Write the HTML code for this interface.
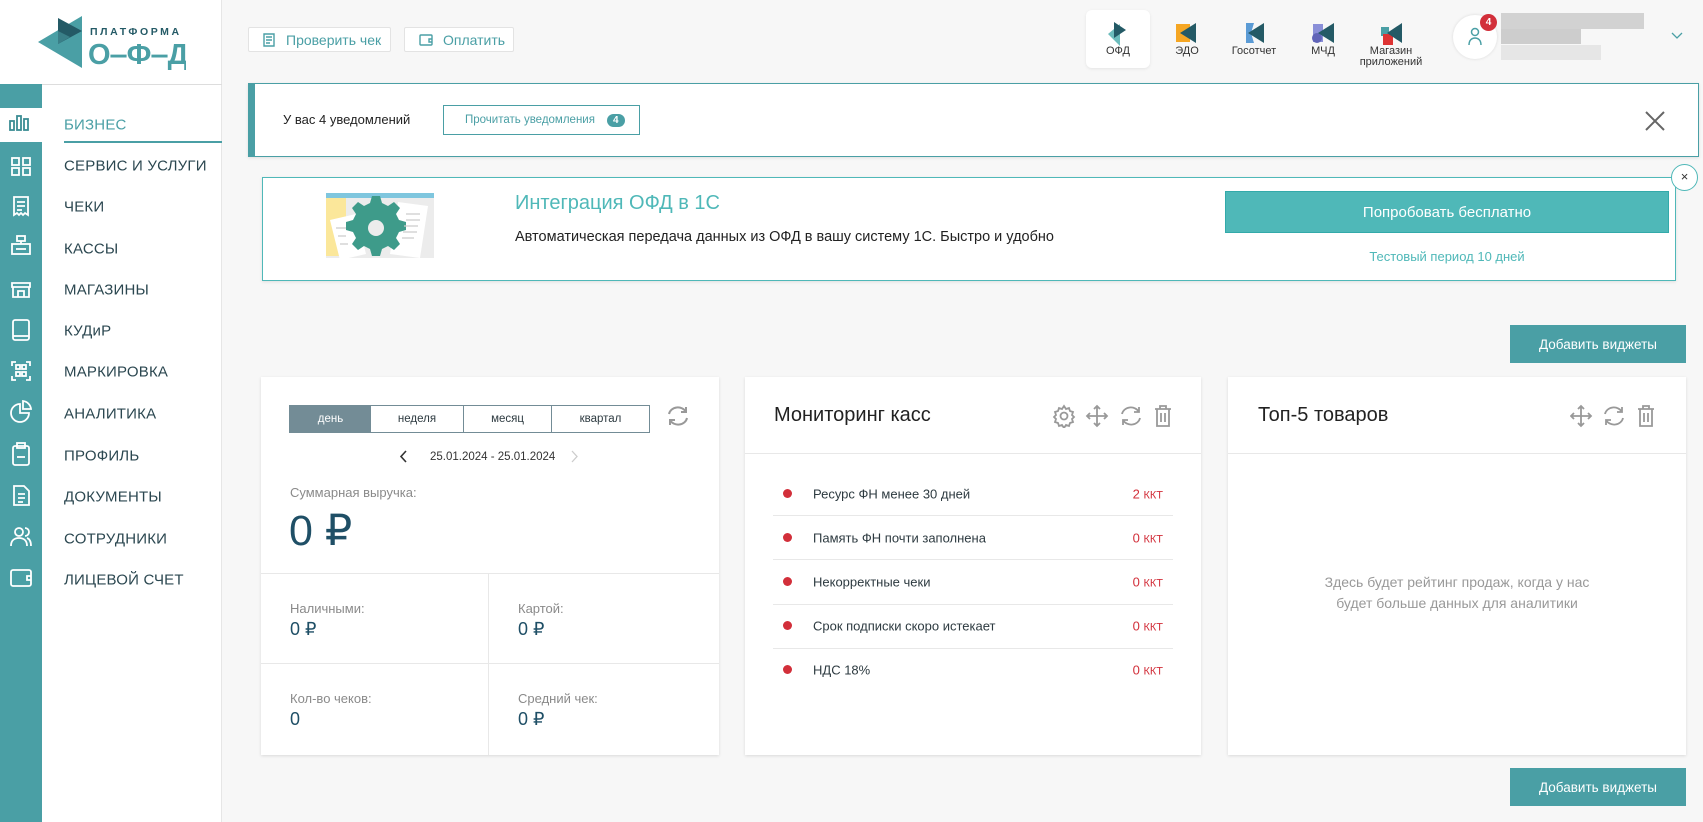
<!DOCTYPE html>
<html><head><meta charset="utf-8"><style>
*{box-sizing:border-box;margin:0;padding:0}
body{width:1703px;height:822px;overflow:hidden;background:#f7f7f7;font-family:"Liberation Sans",sans-serif;position:relative;color:#333}
.a{position:absolute}
.side{left:0;top:0;width:222px;height:822px;background:#fff;border-right:1px solid #e6e6e6}
.rail{left:0;top:84px;width:42px;height:738px;background:#4a9fa5}
.menu{left:64px;font-size:15px;color:#2b4750;letter-spacing:.2px;transform:translateY(-50%)}
.btn{background:#fff;border:1px solid #e3e3e3;border-radius:2px;color:#4a9fa5;font-size:14px;display:flex;align-items:center}
.card{background:#fff;box-shadow:0 1px 3px rgba(0,0,0,.12)}
.teal{background:#4a9fa5;color:#fff;font-size:13.5px;display:flex;align-items:center;justify-content:center}
.lbl{font-size:13px;color:#8a8a8a}
.val{font-size:18px;color:#1f4f66}
.row{left:773px;width:400px;height:1px;background:#e8e8e8}
.dot{width:9px;height:9px;border-radius:50%;background:#d22f3a;left:783px}
.rt{left:813px;font-size:13px;color:#2d3a40;transform:translateY(-50%)}
.rc{right:540px;font-size:13px;color:#d22f3a;transform:translateY(-50%)}
.app{font-size:11px;color:#333;text-align:center;width:80px;line-height:11px}
</style></head><body>
<div class="a side"></div>
<!-- logo -->
<svg class="a" style="left:36px;top:12px" width="150" height="60" viewBox="0 0 150 60">
<polygon points="2,30 46,4 46,56" fill="#4a9fa5"/>
<polygon points="22,6 46,19 22,32" fill="#245a66"/>
<polygon points="22,19 22,32 34,25" fill="#3a7f88"/>
<text x="54" y="23" font-family="Liberation Sans" font-weight="bold" font-size="10.5" letter-spacing="2.6" fill="#245a66">ПЛАТФОРМА</text>
<text x="52" y="52" font-family="Liberation Sans" font-weight="bold" font-size="29" fill="#4a9fa5">О‒Ф‒Д</text>
</svg>
<div class="a" style="left:0;top:84px;width:222px;height:1px;background:#ddd"></div>
<div class="a rail"></div>
<div class="a" style="left:0;top:108px;width:42px;height:34px;background:#fff"></div>
<svg class="a" style="left:0;top:0" width="42" height="822" fill="none" stroke="#fff" stroke-width="1.8">
<g stroke="#3b8c93"><rect x="10" y="121" width="4" height="9"/><rect x="17" y="116" width="4" height="14"/><rect x="24" y="119" width="4" height="11"/></g>
<rect x="12" y="158" width="7" height="7"/><rect x="23" y="158" width="7" height="7"/><rect x="12" y="168" width="7" height="7"/><rect x="23" y="168" width="7" height="7"/>
<path d="M14 197h14v18l-3-2-2 2-2-2-2 2-2-2-3 2z M17 202h8 M17 206h8 M17 210h5"/>
<rect x="17" y="236" width="8" height="5"/><path d="M21 241v3"/><rect x="12" y="244" width="18" height="10"/><path d="M16 249h10"/>
<path d="M12 283h18v4H12z M13 287v10h16v-10 M18 297v-6h6v6"/>
<rect x="13" y="320" width="16" height="20" rx="2"/><path d="M13 336h16"/>
<path d="M12 366v-4h4 M26 362h4v4 M30 376v4h-4 M16 380h-4v-4"/><rect x="16" y="365" width="4" height="4"/><rect x="22" y="365" width="4" height="4"/><rect x="16" y="372" width="4" height="4"/><rect x="22" y="372" width="4" height="4"/>
<path d="M20 404a9 9 0 1 0 9 9h-9z M23 401a9 9 0 0 1 8 8h-8z"/>
<rect x="13" y="446" width="16" height="19" rx="2"/><rect x="17" y="443" width="8" height="5"/><path d="M17 457h8"/>
<path d="M14 486h10l5 5v14H14z M18 494h7 M18 498h7 M18 502h5"/>
<circle cx="19" cy="532" r="4"/><path d="M11 546c0-6 4-8 8-8s8 2 8 8 M25 528a4 4 0 0 1 0 8 M27 538c3 1 4 4 4 8"/>
<rect x="11" y="570" width="20" height="16" rx="2"/><path d="M31 576h-4v4h4"/>
</svg>
<div class="a menu" style="top:125px;color:#4a9fa5">БИЗНЕС</div>
<div class="a" style="left:64px;top:141px;width:158px;height:2px;background:#4a9fa5"></div>
<div class="a menu" style="top:166px">СЕРВИС И УСЛУГИ</div>
<div class="a menu" style="top:207px">ЧЕКИ</div>
<div class="a menu" style="top:249px">КАССЫ</div>
<div class="a menu" style="top:290px">МАГАЗИНЫ</div>
<div class="a menu" style="top:331px">КУДиР</div>
<div class="a menu" style="top:372px">МАРКИРОВКА</div>
<div class="a menu" style="top:414px">АНАЛИТИКА</div>
<div class="a menu" style="top:456px">ПРОФИЛЬ</div>
<div class="a menu" style="top:497px">ДОКУМЕНТЫ</div>
<div class="a menu" style="top:539px">СОТРУДНИКИ</div>
<div class="a menu" style="top:580px">ЛИЦЕВОЙ СЧЕТ</div>

<div class="a btn" style="left:248px;top:27px;width:143px;height:25px;padding-left:14px"><svg width="12" height="14" fill="none" stroke="#4a9fa5" stroke-width="1.4"><path d="M1 1h10v12H1z M3 4h6 M3 7h6 M3 10h4"/></svg><span style="margin-left:11px">Проверить чек</span></div>
<div class="a btn" style="left:404px;top:27px;width:110px;height:25px;padding-left:14px"><svg width="14" height="12" fill="none" stroke="#4a9fa5" stroke-width="1.4"><rect x="1" y="1" width="12" height="10" rx="1"/><path d="M13 5h-3v3h3"/></svg><span style="margin-left:10px">Оплатить</span></div>

<div class="a" style="left:1086px;top:10px;width:64px;height:58px;background:#fff;border-radius:6px;box-shadow:0 1px 3px rgba(0,0,0,.08)"></div>
<svg class="a" style="left:1100px;top:18px" width="320" height="30">
<polygon points="8,16 20,6 20,28" fill="#6cbcbc"/><polygon points="14,4 26,12 14,20" fill="#245a66"/>
<rect x="76" y="6" width="14" height="18" fill="#f5a623"/><polygon points="80,15 96,5 96,25" fill="#245a66"/>
<path d="M146 5h8l-3 10 3 10h-8z" fill="#5b9bd5"/><polygon points="148,15 164,5 164,25" fill="#245a66"/>
<rect x="213" y="6" width="10" height="18" fill="#8a8fd8"/><circle cx="217" cy="20" r="5" fill="#6064b8"/><polygon points="218,15 234,5 234,25" fill="#245a66"/>
<rect x="281" y="9" width="8" height="9" fill="#4a9fa5"/><rect x="283" y="16" width="10" height="11" fill="#d33"/><polygon points="287,15 302,5 302,25" fill="#245a66"/>
</svg>
<div class="a app" style="left:1078px;top:46px">ОФД</div>
<div class="a app" style="left:1147px;top:46px">ЭДО</div>
<div class="a app" style="left:1214px;top:46px">Госотчет</div>
<div class="a app" style="left:1283px;top:46px">МЧД</div>
<div class="a app" style="left:1351px;top:46px">Магазин<br>приложений</div>
<div class="a" style="left:1453px;top:15px;width:44px;height:44px;border-radius:50%;background:#fff;box-shadow:0 0 3px rgba(0,0,0,.12)"></div>
<svg class="a" style="left:1467px;top:27px" width="16" height="20" fill="none" stroke="#4a9fa5" stroke-width="1.5"><circle cx="8" cy="5" r="3.5"/><path d="M2 18c0-5 3-7 6-7s6 2 6 7"/></svg>
<div class="a" style="left:1480px;top:14px;width:17px;height:17px;border-radius:50%;background:#d22f3a;color:#fff;font-size:10px;font-weight:bold;text-align:center;line-height:17px">4</div>
<div class="a" style="left:1501px;top:13px;width:143px;height:16px;background:#d2d2d2"></div>
<div class="a" style="left:1501px;top:29px;width:80px;height:15px;background:#cdcdcd"></div>
<div class="a" style="left:1501px;top:45px;width:100px;height:15px;background:#e6e6e6"></div>
<svg class="a" style="left:1671px;top:32px" width="12" height="8" fill="none" stroke="#4a9fa5" stroke-width="1.3"><path d="M1 1l5 5 5-5"/></svg>

<div class="a" style="left:248px;top:83px;width:1451px;height:74px;background:#fff;border:1px solid #4a9fa5;border-left:7px solid #4a9fa5;box-shadow:0 1px 3px rgba(0,0,0,.1)"></div>
<div class="a" style="left:283px;top:112px;font-size:13px;color:#222">У вас 4 уведомлений</div>
<div class="a" style="left:443px;top:105px;width:197px;height:30px;border:1px solid #4a9fa5;font-size:11.5px;color:#4a9fa5;display:flex;align-items:center;padding-left:21px">Прочитать уведомления<span style="margin-left:12px;background:#4a9fa5;color:#fff;border-radius:8px;font-size:10px;font-weight:bold;padding:1px 6px">4</span></div>
<svg class="a" style="left:1645px;top:111px" width="20" height="20" stroke="#666" stroke-width="2"><path d="M1 1l18 18M19 1L1 19"/></svg>

<div class="a" style="left:262px;top:177px;width:1414px;height:104px;background:#fff;border:1px solid #4fb8b8;box-shadow:0 1px 3px rgba(0,0,0,.1)"></div>
<div class="a" style="left:1671px;top:164px;width:27px;height:27px;border-radius:50%;background:#fff;border:1px solid #4fb8b8;color:#333;font-size:13px;text-align:center;line-height:24px">×</div>
<svg class="a" style="left:326px;top:190px" width="110" height="72">
<rect x="0" y="3" width="108" height="65" fill="#ececec"/><rect x="0" y="3" width="108" height="5" fill="#7fc6de"/><rect x="0" y="8" width="20" height="58" fill="#fbe79a"/>
<path d="M4 30l26-6 10 40-26 6z" fill="#fff"/><path d="M72 12l30 4-8 52-30-4z" fill="#fff"/>
<path d="M46 6h8l2 7 6 3 6-4 6 6-4 6 3 6 7 2v8l-7 2-3 6 4 6-6 6-6-4-6 3-2 7h-8l-2-7-6-3-6 4-6-6 4-6-3-6-7-2v-8l7-2 3-6-4-6 6-6 6 4 6-3z" fill="#3e9b8a"/><circle cx="50" cy="38" r="8" fill="#ececec"/>
<path d="M80 24h14 M80 30h14 M78 36h14 M77 42h14 M76 48h12 M10 38h10 M12 46h8 M14 54h8" stroke="#ccc" stroke-width="1.2"/>
</svg>
<div class="a" style="left:515px;top:192px;font-size:20px;color:#4fb8b8">Интеграция ОФД в 1С</div>
<div class="a" style="left:515px;top:229px;font-size:14.5px;color:#222">Автоматическая передача данных из ОФД в вашу систему 1С. Быстро и удобно</div>
<div class="a" style="left:1225px;top:191px;width:444px;height:42px;background:#4fb8b8;border:1px solid #3aa;color:#fff;font-size:15px;display:flex;align-items:center;justify-content:center">Попробовать бесплатно</div>
<div class="a" style="left:1225px;top:249px;width:444px;text-align:center;font-size:13px;color:#4fb8b8">Тестовый период 10 дней</div>

<div class="a teal" style="left:1510px;top:325px;width:176px;height:38px">Добавить виджеты</div>
<div class="a teal" style="left:1510px;top:768px;width:176px;height:38px">Добавить виджеты</div>

<div class="a card" style="left:261px;top:377px;width:458px;height:378px"></div>
<div class="a" style="left:289px;top:405px;width:361px;height:28px;border:1px solid #738c96;display:flex;font-size:11.5px;color:#2d3a40">
<div style="width:81px;background:#738c96;color:#fff;display:flex;align-items:center;justify-content:center">день</div>
<div style="width:93px;border-right:1px solid #738c96;display:flex;align-items:center;justify-content:center">неделя</div>
<div style="width:88px;border-right:1px solid #738c96;display:flex;align-items:center;justify-content:center">месяц</div>
<div style="flex:1;display:flex;align-items:center;justify-content:center">квартал</div></div>
<svg class="a" style="left:666px;top:405px" width="24" height="22" fill="none" stroke="#999" stroke-width="2"><path d="M3 9a9 8 0 0 1 17-2 M20 2v5h-5 M21 13a9 8 0 0 1-17 2 M4 20v-5h5"/></svg>
<svg class="a" style="left:399px;top:450px" width="8" height="13" fill="none" stroke="#333" stroke-width="1.6"><path d="M7 1L2 6.5 7 12"/></svg>
<svg class="a" style="left:571px;top:450px" width="8" height="13" fill="none" stroke="#ccc" stroke-width="1.3"><path d="M1 1l5 5.5L1 12"/></svg>
<div class="a" style="left:430px;top:451px;font-size:11.5px;color:#333">25.01.2024 - 25.01.2024</div>
<div class="a lbl" style="left:290px;top:485px">Суммарная выручка:</div>
<div class="a" style="left:289px;top:506px;font-size:43px;color:#1f4f66">0 ₽</div>
<div class="a" style="left:261px;top:573px;width:458px;height:1px;background:#e8e8e8"></div>
<div class="a" style="left:261px;top:663px;width:458px;height:1px;background:#e8e8e8"></div>
<div class="a" style="left:488px;top:573px;width:1px;height:182px;background:#e8e8e8"></div>
<div class="a lbl" style="left:290px;top:601px">Наличными:</div><div class="a val" style="left:290px;top:619px">0 ₽</div>
<div class="a lbl" style="left:518px;top:601px">Картой:</div><div class="a val" style="left:518px;top:619px">0 ₽</div>
<div class="a lbl" style="left:290px;top:691px">Кол-во чеков:</div><div class="a val" style="left:290px;top:709px">0</div>
<div class="a lbl" style="left:518px;top:691px">Средний чек:</div><div class="a val" style="left:518px;top:709px">0 ₽</div>

<div class="a card" style="left:745px;top:377px;width:456px;height:378px"></div>
<div class="a" style="left:774px;top:404px;font-size:20px;color:#222">Мониторинг касс</div>
<div class="a" style="left:745px;top:453px;width:456px;height:1px;background:#e8e8e8"></div>
<svg class="a" style="left:1053px;top:404px" width="125" height="24" fill="none" stroke="#999" stroke-width="1.8">
<circle cx="11" cy="12" r="3.5"/><path d="M11 2l2 3 3-1 1 3 3 1-1 3 2 2-2 2 1 3-3 1-1 3-3-1-2 3-2-3-3 1-1-3-3-1 1-3-2-2 2-2-1-3 3-1 1-3 3 1z"/>
<path d="M44 2v20 M34 12h20 M41 5l3-3 3 3 M41 19l3 3 3-3 M37 9l-3 3 3 3 M51 9l3 3-3 3"/>
<path d="M69 10a9 8 0 0 1 17-2 M86 3v5h-5 M87 14a9 8 0 0 1-17 2 M70 21v-5h5"/>
<path d="M102 5h16 M107 5V2h6v3 M104 5v17h12V5 M108 9v9 M112 9v9"/>
</svg>
<div class="a dot" style="top:489px"></div><div class="a rt" style="top:494px">Ресурс ФН менее 30 дней</div><div class="a rc" style="top:494px">2 <span style="font-size:11px">ККТ</span></div>
<div class="a row" style="top:515px"></div>
<div class="a dot" style="top:533px"></div><div class="a rt" style="top:538px">Память ФН почти заполнена</div><div class="a rc" style="top:538px">0 <span style="font-size:11px">ККТ</span></div>
<div class="a row" style="top:559px"></div>
<div class="a dot" style="top:577px"></div><div class="a rt" style="top:582px">Некорректные чеки</div><div class="a rc" style="top:582px">0 <span style="font-size:11px">ККТ</span></div>
<div class="a row" style="top:604px"></div>
<div class="a dot" style="top:621px"></div><div class="a rt" style="top:626px">Срок подписки скоро истекает</div><div class="a rc" style="top:626px">0 <span style="font-size:11px">ККТ</span></div>
<div class="a row" style="top:648px"></div>
<div class="a dot" style="top:665px"></div><div class="a rt" style="top:670px">НДС 18%</div><div class="a rc" style="top:670px">0 <span style="font-size:11px">ККТ</span></div>

<div class="a card" style="left:1228px;top:377px;width:458px;height:378px"></div>
<div class="a" style="left:1258px;top:404px;font-size:20px;color:#222">Топ-5 товаров</div>
<div class="a" style="left:1228px;top:453px;width:458px;height:1px;background:#e8e8e8"></div>
<svg class="a" style="left:1570px;top:404px" width="90" height="24" fill="none" stroke="#999" stroke-width="1.8">
<path d="M11 2v20 M1 12h20 M8 5l3-3 3 3 M8 19l3 3 3-3 M4 9l-3 3 3 3 M18 9l3 3-3 3"/>
<path d="M35 10a9 8 0 0 1 17-2 M52 3v5h-5 M53 14a9 8 0 0 1-17 2 M36 21v-5h5"/>
<path d="M68 5h16 M73 5V2h6v3 M70 5v17h12V5 M74 9v9 M78 9v9"/>
</svg>
<div class="a" style="left:1228px;top:572px;width:458px;text-align:center;font-size:14px;color:#999;line-height:21px">Здесь будет рейтинг продаж, когда у нас<br>будет больше данных для аналитики</div>
</body></html>
